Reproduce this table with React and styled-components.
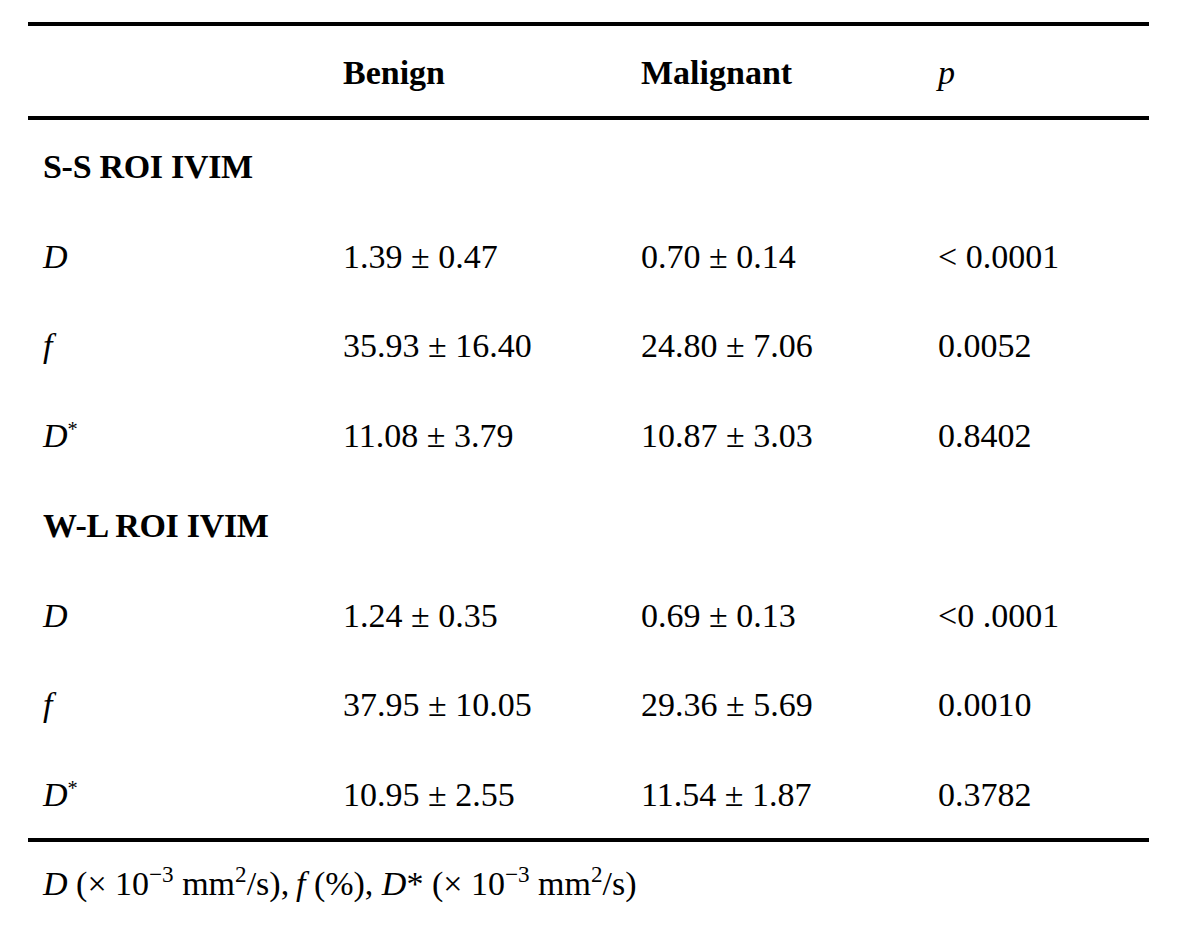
import React from "react";
import styled, { createGlobalStyle } from "styled-components";

const Global = createGlobalStyle`
  html, body { margin: 0; padding: 0; background: #fff; }
  body { font-family: "Liberation Serif", "Times New Roman", serif; color: #000; }
`;

const Page = styled.div`
  padding: 22px 0 0 28px;
  width: 1121px;
`;

const Table = styled.div`
  border-top: 4px solid #000;
  border-bottom: 4px solid #000;
`;

const Row = styled.div`
  display: grid;
  grid-template-columns: 300px 298px 297px 1fr;
  box-sizing: border-box;
  height: ${(p) => (p.$head ? "94px" : "89.75px")};
  padding-top: 4px;
  align-items: center;
  font-size: 34px;
  ${(p) => p.$head && `border-bottom: 4px solid #000; font-weight: bold;`}
`;

const Cell = styled.div`
  padding-left: 15px;
  white-space: nowrap;
  font-weight: ${(p) => (p.$plain ? "normal" : "inherit")};
  font-style: ${(p) => (p.$italic ? "italic" : "normal")};
`;

const Group = styled(Cell)`
  grid-column: 1 / -1;
  font-weight: bold;
  letter-spacing: -0.3px;
`;

const Sym = styled.i`
  font-style: italic;
`;

const Sup = styled.sup`
  font-size: ${(p) => (p.$big ? "0.68em" : "0.6em")};
  vertical-align: 0.55em;
  line-height: 0;
`;

const Note = styled.div`
  height: 84px;
  display: flex;
  align-items: center;
  padding-left: 15px;
  font-size: 34px;
  white-space: nowrap;
`;

const groups = [
  {
    title: "S-S ROI IVIM",
    rows: [
      ["D", false, "1.39 ± 0.47", "0.70 ± 0.14", "< 0.0001"],
      ["f", false, "35.93 ± 16.40", "24.80 ± 7.06", "0.0052"],
      ["D", true, "11.08 ± 3.79", "10.87 ± 3.03", "0.8402"],
    ],
  },
  {
    title: "W-L ROI IVIM",
    rows: [
      ["D", false, "1.24 ± 0.35", "0.69 ± 0.13", "<0 .0001"],
      ["f", false, "37.95 ± 10.05", "29.36 ± 5.69", "0.0010"],
      ["D", true, "10.95 ± 2.55", "11.54 ± 1.87", "0.3782"],
    ],
  },
];

export default function App() {
  return (
    <Page>
      <Global />
      <Table>
        <Row $head>
          <Cell />
          <Cell>Benign</Cell>
          <Cell>Malignant</Cell>
          <Cell $italic $plain>p</Cell>
        </Row>
        {groups.map((g) => (
          <React.Fragment key={g.title}>
            <Row>
              <Group>{g.title}</Group>
            </Row>
            {g.rows.map(([sym, star, b, m, p], i) => (
              <Row key={i}>
                <Cell>
                  <Sym>{sym}</Sym>
                  {star && <Sup>*</Sup>}
                </Cell>
                <Cell>{b}</Cell>
                <Cell>{m}</Cell>
                <Cell>{p}</Cell>
              </Row>
            ))}
          </React.Fragment>
        ))}
      </Table>
      <Note>
        <span>
          <Sym>D</Sym> (× 10<Sup $big>−3</Sup> mm<Sup $big>2</Sup>/s),{"\u2009"}<Sym>f</Sym> (%),{" "}
          <Sym>D</Sym>* (× 10<Sup $big>−3</Sup> mm<Sup $big>2</Sup>/s)
        </span>
      </Note>
    </Page>
  );
}
